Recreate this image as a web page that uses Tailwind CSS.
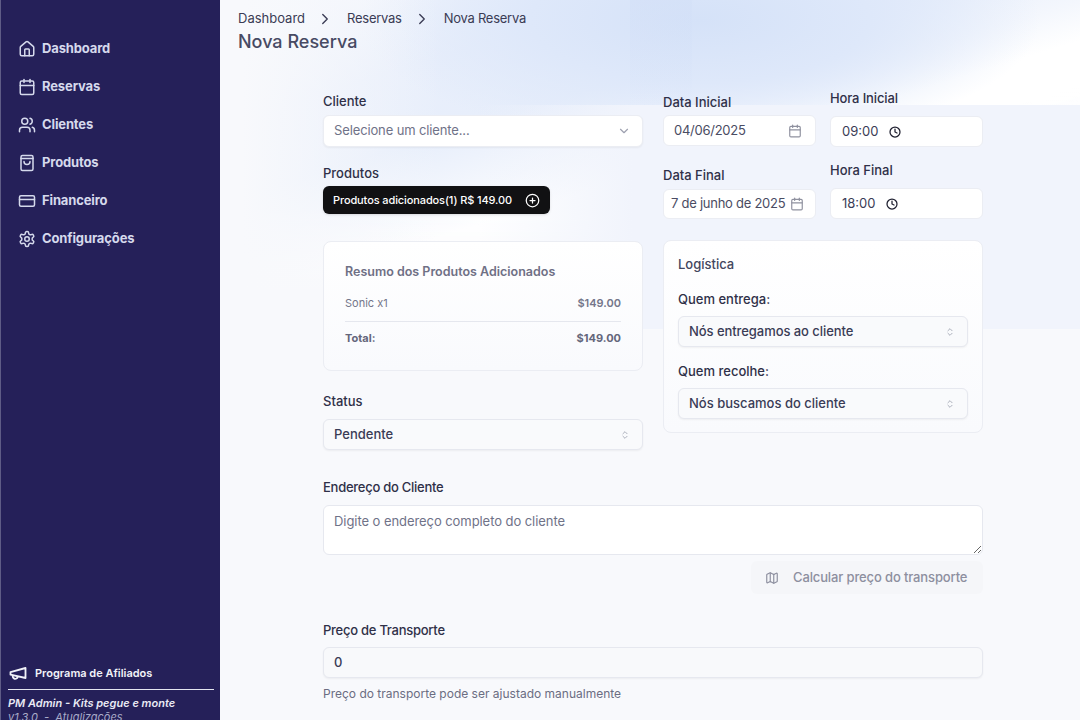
<!DOCTYPE html>
<html lang="pt-BR">
<head>
<meta charset="utf-8">
<title>Nova Reserva</title>
<script src="https://cdn.jsdelivr.net/npm/@tailwindcss/browser@4"></script>
</head>
<body class="m-0 h-[720px] w-[1080px] overflow-hidden bg-[#f8f9fc] font-['Inter','Noto_Sans',sans-serif] text-[#2f3048]">
<div class="flex h-[720px] w-[1080px] overflow-hidden">
  <aside class="flex h-[720px] w-[220px] shrink-0 flex-col overflow-hidden border-l border-[#5f5c86] bg-[#252059]">
    <nav class="flex flex-col gap-[14px] pt-[37px] pl-[17px] text-[13px] font-bold tracking-[-0.01em] text-[#d5d9ec]">
      <a class="flex h-6 items-center gap-[6px]">
        <svg class="size-[18px]" viewBox="0 0 24 24" fill="none" stroke="currentColor" stroke-width="2" stroke-linecap="round" stroke-linejoin="round"><path d="M15 21v-8a1 1 0 0 0-1-1h-4a1 1 0 0 0-1 1v8"/><path d="M3 10a2 2 0 0 1 .709-1.528l7-5.999a2 2 0 0 1 2.582 0l7 5.999A2 2 0 0 1 21 10v9a2 2 0 0 1-2 2H5a2 2 0 0 1-2-2z"/></svg>
        <span>Dashboard</span></a>
      <a class="flex h-6 items-center gap-[6px]">
        <svg class="size-[18px]" viewBox="0 0 24 24" fill="none" stroke="currentColor" stroke-width="2" stroke-linecap="round" stroke-linejoin="round"><path d="M8 2v4"/><path d="M16 2v4"/><rect x="3" y="4" width="18" height="18" rx="2"/><path d="M3 10h18"/></svg>
        <span>Reservas</span></a>
      <a class="flex h-6 items-center gap-[6px]">
        <svg class="size-[18px]" viewBox="0 0 24 24" fill="none" stroke="currentColor" stroke-width="2" stroke-linecap="round" stroke-linejoin="round"><path d="M16 21v-2a4 4 0 0 0-4-4H6a4 4 0 0 0-4 4v2"/><circle cx="9" cy="7" r="4"/><path d="M22 21v-2a4 4 0 0 0-3-3.87"/><path d="M16 3.13a4 4 0 0 1 0 7.75"/></svg>
        <span>Clientes</span></a>
      <a class="flex h-6 items-center gap-[6px]">
        <svg class="size-[18px]" viewBox="0 0 24 24" fill="none" stroke="currentColor" stroke-width="2" stroke-linecap="round" stroke-linejoin="round"><path d="M6 2h12a2 2 0 0 1 2 2v16a2 2 0 0 1-2 2H6a2 2 0 0 1-2-2V4a2 2 0 0 1 2-2Z"/><path d="M4 6h16"/><path d="M16 10a4 4 0 0 1-8 0"/></svg>
        <span>Produtos</span></a>
      <a class="flex h-6 items-center gap-[6px]">
        <svg class="size-[18px]" viewBox="0 0 24 24" fill="none" stroke="currentColor" stroke-width="2" stroke-linecap="round" stroke-linejoin="round"><rect x="2" y="5" width="20" height="14" rx="2"/><path d="M2 10h20"/></svg>
        <span>Financeiro</span></a>
      <a class="flex h-6 items-center gap-[6px]">
        <svg class="size-[18px]" viewBox="0 0 24 24" fill="none" stroke="currentColor" stroke-width="2" stroke-linecap="round" stroke-linejoin="round"><path d="M12.22 2h-.44a2 2 0 0 0-2 2v.18a2 2 0 0 1-1 1.73l-.43.25a2 2 0 0 1-2 0l-.15-.08a2 2 0 0 0-2.73.73l-.22.38a2 2 0 0 0 .73 2.73l.15.1a2 2 0 0 1 1 1.72v.51a2 2 0 0 1-1 1.74l-.15.09a2 2 0 0 0-.73 2.73l.22.38a2 2 0 0 0 2.73.73l.15-.08a2 2 0 0 1 2 0l.43.25a2 2 0 0 1 1 1.73V20a2 2 0 0 0 2 2h.44a2 2 0 0 0 2-2v-.18a2 2 0 0 1 1-1.73l.43-.25a2 2 0 0 1 2 0l.15.08a2 2 0 0 0 2.73-.73l.22-.39a2 2 0 0 0-.73-2.73l-.15-.08a2 2 0 0 1-1-1.74v-.5a2 2 0 0 1 1-1.74l.15-.09a2 2 0 0 0 .73-2.73l-.22-.38a2 2 0 0 0-2.73-.73l-.15.08a2 2 0 0 1-2 0l-.43-.25a2 2 0 0 1-1-1.73V4a2 2 0 0 0-2-2z"/><circle cx="12" cy="12" r="3"/></svg>
        <span>Configurações</span></a>
    </nav>
    <div class="mt-auto -mb-[4px] pl-[7px] pr-[6px]">
      <a class="flex h-[20px] items-center gap-[7px] text-[11px] font-semibold text-[#f1f2f8]">
        <svg class="size-[20px]" viewBox="0 0 24 24" fill="none" stroke="currentColor" stroke-width="2.2" stroke-linecap="round" stroke-linejoin="round"><path d="m3 11 18-5v12L3 14v-3z"/><path d="M11.6 16.8a3 3 0 1 1-5.8-1.6"/></svg>
        <span>Programa de Afiliados</span></a>
      <div class="mt-[6px] border-t border-[#e4e5ef] pt-[6px] text-[11px] leading-[14px] italic">
        <p class="font-semibold text-[#e9eaf4]">PM Admin - Kits pegue e monte</p>
        <p class="h-[14px] whitespace-pre text-[#a9abc8]">v1.3.0  -  Atualizações</p>
      </div>
    </div>
  </aside>

  <main class="relative h-[720px] flex-1 overflow-hidden bg-[#f8f9fc]">
    <!-- decorative background -->
    <div class="absolute inset-x-0 top-0 h-[300px] bg-[radial-gradient(ellipse_340px_125px_at_480px_20px,#d5e2f8_0%,#deE8fa_50%,rgba(228,236,250,0)_100%),linear-gradient(163deg,#f6f8fd_0%,#e9effb_22%,#e7eefb_36%,#f4f7fd_47%,#ffffff_54%,#ffffff_62%,rgba(255,255,255,0)_76%)] [mask-image:linear-gradient(180deg,#000_70%,rgba(0,0,0,0)_100%)]"></div>
    <div class="absolute left-0 top-0 h-[300px] w-[220px] bg-[linear-gradient(90deg,#f8f9fc_10%,rgba(248,249,252,0)_100%)]"></div>
    <div class="absolute left-[410px] top-0 h-[105px] w-[62px] bg-gradient-to-b from-[#d2dff7]/50 to-transparent"></div>
    <div class="absolute inset-x-0 top-[105px] h-[224px] bg-[linear-gradient(90deg,rgba(241,244,252,0)_30%,#f1f4fc_48%,#f1f4fc_100%)]"></div>

    <div class="relative z-10">
      <header class="pl-[18px] pt-[10px]">
        <div class="flex h-[18px] items-center text-[13px] text-[#3b3c55]">
          <span>Dashboard</span>
          <svg class="ml-[11px] mr-[13px] size-[18px]" viewBox="0 0 24 24" fill="none" stroke="currentColor" stroke-width="1.8" stroke-linecap="round" stroke-linejoin="round"><path d="m9 18 6-6-6-6"/></svg>
          <span class="tracking-[-0.02em]">Reservas</span>
          <svg class="ml-[11px] mr-[13px] size-[18px]" viewBox="0 0 24 24" fill="none" stroke="currentColor" stroke-width="1.8" stroke-linecap="round" stroke-linejoin="round"><path d="m9 18 6-6-6-6"/></svg>
          <span class="tracking-[-0.02em]">Nova Reserva</span>
        </div>
        <h1 class="mt-[2px] text-[18px] leading-6 font-medium text-[#474a63]">Nova Reserva</h1>
      </header>

      <div class="ml-[103px] mt-[37px] grid w-[660px] grid-cols-2 gap-x-5">
        <!-- left column -->
        <div class="flex flex-col">
          <label class="h-[24px] pt-px text-[13px] leading-[18px] font-medium">Cliente</label>
          <div class="flex h-[32px] items-center justify-between rounded-md border border-[#ebedf3] bg-white pl-[10px] pr-[11px] text-[13px] tracking-[-0.01em] text-[#6f7288] shadow-xs">
            <span>Selecione um cliente...</span>
            <svg class="size-[14px] text-[#9ea1b0]" viewBox="0 0 24 24" fill="none" stroke="currentColor" stroke-width="2" stroke-linecap="round" stroke-linejoin="round"><path d="m6 9 6 6 6-6"/></svg>
          </div>
          <label class="mt-[17px] h-[22px] text-[13px] leading-[18px] font-medium">Produtos</label>
          <div class="flex h-[28px] w-[227px] items-center justify-between rounded-md bg-[#111113] pl-[10px] pr-[10px] text-[11px] font-medium tracking-[-0.01em] text-white shadow-sm">
            <span>Produtos adicionados(1) R$ 149.00</span>
            <svg class="size-[15px]" viewBox="0 0 24 24" fill="none" stroke="currentColor" stroke-width="2" stroke-linecap="round" stroke-linejoin="round"><circle cx="12" cy="12" r="10"/><path d="M8 12h8"/><path d="M12 8v8"/></svg>
          </div>

          <section class="mt-[27px] h-[130px] rounded-lg border border-[#ebedf3] bg-gradient-to-b from-white to-[#f9fafd] px-[21px] pt-[21px]">
            <h2 class="text-[12.5px] leading-[18px] font-semibold text-[#6f7085]">Resumo dos Produtos Adicionados</h2>
            <div class="mt-[13px] flex h-[18px] items-center justify-between text-[11px] text-[#74768a]">
              <span>Sonic x1</span><span class="font-semibold">$149.00</span>
            </div>
            <div class="mt-[9px] border-t border-[#e5e7ee] pt-[7px]">
              <div class="flex h-[18px] items-center justify-between text-[11px] font-bold text-[#64667b]">
                <span>Total:</span><span>$149.00</span>
              </div>
            </div>
          </section>

          <label class="mt-[21px] h-[18px] text-[13px] leading-[18px] font-medium">Status</label>
          <div class="mt-[9px] flex h-[31px] items-center justify-between rounded-md border border-[#e6e8ef] bg-[#f9fafc] pl-[10px] pr-[12px] text-[13px] font-medium text-[#3a3c56] shadow-xs">
            <span>Pendente</span>
            <svg class="size-[10px] text-[#9ea1b0]" viewBox="0 0 24 24" fill="none" stroke="currentColor" stroke-width="2" stroke-linecap="round" stroke-linejoin="round"><path d="m7 15 5 5 5-5"/><path d="m7 9 5-5 5 5"/></svg>
          </div>
        </div>

        <!-- right column -->
        <div class="flex flex-col">
          <div class="grid grid-cols-2 gap-x-[14px]">
            <div class="flex flex-col">
              <label class="h-[24px] pt-[2px] text-[13px] leading-[18px] font-medium">Data Inicial</label>
              <div class="flex h-[31px] items-center justify-between rounded-md border border-[#ebedf3] bg-white pl-[10px] pr-[13px] text-[13px] tracking-[-0.02em] text-[#4a4c63]">
                <span>04/06/2025</span>
                <svg class="size-[14px] text-[#8f919f]" viewBox="0 0 24 24" fill="none" stroke="currentColor" stroke-width="2" stroke-linecap="round" stroke-linejoin="round"><path d="M8 2v4"/><path d="M16 2v4"/><rect x="3" y="4" width="18" height="18" rx="2"/><path d="M3 10h18"/></svg>
              </div>
            </div>
            <div class="flex flex-col">
              <label class="-mt-[1px] h-[26px] text-[13px] leading-[16px] font-medium tracking-[-0.01em]">Hora Inicial</label>
              <div class="flex h-[31px] items-center gap-[11px] rounded-md border border-[#ebedf3] bg-white pl-[11px] text-[13px] text-[#3a3c56]">
                <span>09:00</span>
                <svg class="size-[12px] text-[#1f2030]" viewBox="0 0 24 24" fill="none" stroke="currentColor" stroke-width="2.5" stroke-linecap="round" stroke-linejoin="round"><circle cx="12" cy="12" r="10"/><path d="M12 6v6l4 2"/></svg>
              </div>
            </div>
            <div class="mt-[19px] flex flex-col">
              <label class="h-[23px] text-[13px] leading-[18px] font-medium">Data Final</label>
              <div class="flex h-[30px] items-center justify-between rounded-md border border-[#ebedf3] bg-white pl-[7px] pr-[11px] text-[13px] text-[#4a4c63]">
                <span class="whitespace-nowrap tracking-[-0.02em]">7 de junho de 2025</span>
                <svg class="size-[14px] shrink-0 text-[#8f919f]" viewBox="0 0 24 24" fill="none" stroke="currentColor" stroke-width="2" stroke-linecap="round" stroke-linejoin="round"><path d="M8 2v4"/><path d="M16 2v4"/><rect x="3" y="4" width="18" height="18" rx="2"/><path d="M3 10h18"/></svg>
              </div>
            </div>
            <div class="mt-[15px] flex flex-col">
              <label class="h-[26px] text-[13px] leading-[16px] font-medium">Hora Final</label>
              <div class="flex h-[31px] items-center gap-[11px] rounded-md border border-[#ebedf3] bg-white pl-[11px] text-[13px] text-[#3a3c56]">
                <span>18:00</span>
                <svg class="size-[12px] text-[#1f2030]" viewBox="0 0 24 24" fill="none" stroke="currentColor" stroke-width="2.5" stroke-linecap="round" stroke-linejoin="round"><circle cx="12" cy="12" r="10"/><path d="M12 6v6l4 2"/></svg>
              </div>
            </div>
          </div>

          <section class="mt-[21px] h-[193px] rounded-lg border border-[#ebedf3] bg-gradient-to-b from-white to-[#f9fafd] px-[14px] pt-[14px]">
            <h2 class="h-[18px] text-[13px] leading-[18px] font-medium text-[#44465e]">Logística</h2>
            <label class="mt-[17px] block h-[18px] text-[13px] leading-[18px] font-medium">Quem entrega:</label>
            <div class="mt-[8px] flex h-[31px] items-center justify-between rounded-md border border-[#e6e8ef] bg-[#f9fafc] pl-[10px] pr-[12px] text-[13px] font-medium tracking-[-0.005em] text-[#3a3c56] shadow-xs">
              <span>Nós entregamos ao cliente</span>
              <svg class="size-[10px] text-[#9ea1b0]" viewBox="0 0 24 24" fill="none" stroke="currentColor" stroke-width="2" stroke-linecap="round" stroke-linejoin="round"><path d="m7 15 5 5 5-5"/><path d="m7 9 5-5 5 5"/></svg>
            </div>
            <label class="mt-[15px] block h-[18px] text-[13px] leading-[18px] font-medium">Quem recolhe:</label>
            <div class="mt-[8px] flex h-[31px] items-center justify-between rounded-md border border-[#e6e8ef] bg-[#f9fafc] pl-[10px] pr-[12px] text-[13px] font-medium text-[#3a3c56] shadow-xs">
              <span>Nós buscamos do cliente</span>
              <svg class="size-[10px] text-[#9ea1b0]" viewBox="0 0 24 24" fill="none" stroke="currentColor" stroke-width="2" stroke-linecap="round" stroke-linejoin="round"><path d="m7 15 5 5 5-5"/><path d="m7 9 5-5 5 5"/></svg>
            </div>
          </section>
        </div>

        <!-- full width -->
        <div class="col-span-2 flex flex-col">
          <label class="mt-[28px] h-[18px] text-[13px] leading-[18px] font-medium tracking-[-0.02em]">Endereço do Cliente</label>
          <textarea class="mt-[9px] block h-[50px] w-full rounded-md border border-[#e6e8ef] bg-white px-[10px] py-[6px] text-[13px] leading-[18px] tracking-[-0.005em] outline-none placeholder:text-[#6f7288]" placeholder="Digite o endereço completo do cliente"></textarea>
          <div class="mt-[6px] flex justify-end">
            <button class="flex h-[33px] w-[232px] items-center gap-[14px] rounded-md bg-[#f5f6f9] pl-[14px] text-[13px] font-medium tracking-[-0.01em] text-[#8d8f9f]">
              <svg class="size-[14px]" viewBox="0 0 24 24" fill="none" stroke="currentColor" stroke-width="2" stroke-linecap="round" stroke-linejoin="round"><path d="M14.106 5.553a2 2 0 0 0 1.788 0l3.659-1.83A1 1 0 0 1 21 4.619v12.764a1 1 0 0 1-.553.894l-4.553 2.277a2 2 0 0 1-1.788 0l-4.212-2.106a2 2 0 0 0-1.788 0l-3.659 1.83A1 1 0 0 1 3 19.381V6.618a1 1 0 0 1 .553-.894l4.553-2.277a2 2 0 0 1 1.788 0z"/><path d="M15 5.764v15"/><path d="M9 3.236v15"/></svg>
              <span>Calcular preço do transporte</span>
            </button>
          </div>
          <label class="mt-[27px] h-[18px] text-[13px] leading-[18px] font-medium tracking-[-0.02em]">Preço de Transporte</label>
          <div class="mt-[8px] flex h-[31px] items-center rounded-md border border-[#e6e8ef] bg-[#f8f9fb] pl-[10px] text-[13px] font-medium text-[#3a3c56] shadow-xs">0</div>
          <p class="mt-[8px] text-[12px] leading-[16px] text-[#6b6d82]">Preço do transporte pode ser ajustado manualmente</p>
        </div>
      </div>
    </div>
  </main>
</div>
</body>
</html>
